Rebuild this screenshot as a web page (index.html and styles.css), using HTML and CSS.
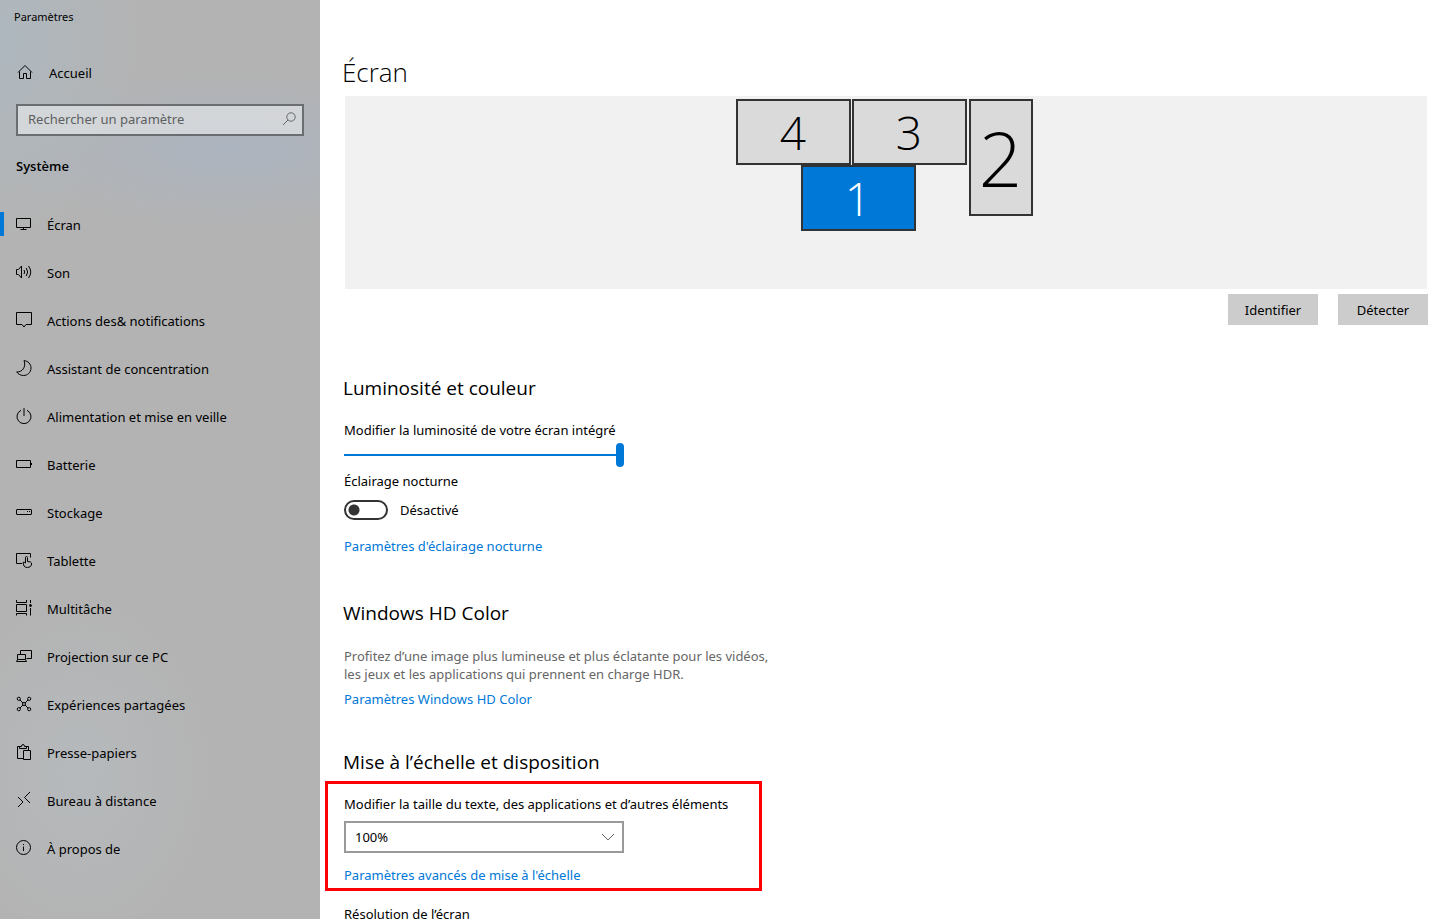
FILE: index.html
```html
<!DOCTYPE html>
<html lang="fr">
<head>
    <meta charset="UTF-8">
    <meta name="viewport" content="width=device-width, initial-scale=1.0">
    <title>Paramètres</title>
    <link rel="stylesheet" href="styles.css">
</head>
<body>
    <div class="window">
        <aside class="sidebar">
            <div class="window-title">Paramètres</div>

            <a href="#" class="nav-item home">
                <svg class="icon" viewBox="0 0 16 16"><path d="M1 8.5 8 1.5l7 7M2.5 7.5v7h4v-5h3v5h4v-7"/></svg>
                <span>Accueil</span>
            </a>

            <div class="search">
                <input type="text" class="search-input" placeholder="Rechercher un paramètre" aria-label="Rechercher un paramètre">
                <svg class="search-icon" viewBox="0 0 16 16"><circle cx="10" cy="6" r="4.2"/><path d="M7 9l-5 5"/></svg>
            </div>

            <h2 class="group-title">Système</h2>

            <nav class="nav">
                <a href="#" class="nav-item active">
                    <svg class="icon" viewBox="0 0 16 16"><path d="M.5 2.5h14v9H.5zM7.5 11.5v2M4.5 13.5h6"/></svg>
                    <span>Écran</span>
                </a>
                <a href="#" class="nav-item">
                    <svg class="icon" viewBox="0 0 16 16"><path d="M.5 5.500h2l3-3.500v12l-3-3.500h-2zM8 6q1.300 2 0 4M10.300 4q2.700 4 0 8M12.500 2q4.500 6 0 12"/></svg>
                    <span>Son</span>
                </a>
                <a href="#" class="nav-item">
                    <svg class="icon" viewBox="0 0 16 16"><path d="M.5.5h15v12H10L8 15l-2-2.500H.5z"/></svg>
                    <span>Actions des&amp; notifications</span>
                </a>
                <a href="#" class="nav-item">
                    <svg class="icon" viewBox="0 0 16 16"><path d="M8 .6C12 1 15 4 15 8c0 4.500-3.500 7.500-7.500 7.500-3 0-5.500-1.500-6.800-3.600C6 12.500 10.500 7 8 .6z"/></svg>
                    <span>Assistant de concentration</span>
                </a>
                <a href="#" class="nav-item">
                    <svg class="icon" viewBox="0 0 16 16"><path d="M5 2.300a7 7 0 1 0 6 0M8 0v8"/></svg>
                    <span>Alimentation et mise en veille</span>
                </a>
                <a href="#" class="nav-item">
                    <svg class="icon" viewBox="0 0 16 16"><path d="M.5 4.500h14v7H.5zM15.500 7v2"/></svg>
                    <span>Batterie</span>
                </a>
                <a href="#" class="nav-item">
                    <svg class="icon" viewBox="0 0 16 16"><rect x=".5" y="5.500" width="15" height="5" rx=".5"/><path d="M11 7.500h1M13 7.500h1"/></svg>
                    <span>Stockage</span>
                </a>
                <a href="#" class="nav-item">
                    <svg class="icon" viewBox="0 0 16 16"><path d="M6 11.500H.5V1.500h14v4M9.500 11V5.500q0-1 1-1t1 1v4q3.500 0 4 1.500v2q-1 2.500-4 2.500-2.500 0-3.500-1.500L7 10.500q1-1 2.500.5"/></svg>
                    <span>Tablette</span>
                </a>
                <a href="#" class="nav-item">
                    <svg class="icon" viewBox="0 0 16 16"><path d="M.5 4.500h10v7H.5zM.5 0v2.500h10V0M.5 15.500v-2h10v2M14.500 0v3M14.500 8v7.500"/><circle class="fill" cx="14.500" cy="5.500" r="1"/></svg>
                    <span>Multitâche</span>
                </a>
                <a href="#" class="nav-item">
                    <svg class="icon" viewBox="0 0 16 16"><path d="M4.500 6V2.500h11v8h-5M1.500 6.500h8v5h-8zM1.500 11.500l-1 2h10l-1-2"/></svg>
                    <span>Projection sur ce PC</span>
                </a>
                <a href="#" class="nav-item">
                    <svg class="icon" viewBox="0 0 16 16"><path d="M4 4l3 3M12 4L9 7M4 12l3-3M12 12L9 9"/><circle cx="2.800" cy="2.800" r="1.600"/><circle cx="13.200" cy="2.800" r="1.600"/><circle cx="2.800" cy="13.200" r="1.600"/><circle cx="13.200" cy="13.200" r="1.600"/><circle cx="8" cy="8" r="1.500"/></svg>
                    <span>Expériences partagées</span>
                </a>
                <a href="#" class="nav-item">
                    <svg class="icon" viewBox="0 0 16 16"><path d="M7 14.500H1.500v-12H4M10 2.500h2.500V6M3.500 4.500v-2H5.500Q5.500.5 7 .5t1.500 2h2v2zM7.500 6.500h7v9h-7z"/></svg>
                    <span>Presse-papiers</span>
                </a>
                <a href="#" class="nav-item">
                    <svg class="icon" viewBox="0 0 16 16"><path d="M2 5l5 5-5 5M14 0L8.500 5.500 14 11"/></svg>
                    <span>Bureau à distance</span>
                </a>
                <a href="#" class="nav-item">
                    <svg class="icon" viewBox="0 0 16 16"><circle cx="7.500" cy="7.500" r="7"/><path d="M7.500 6.500V11M7.500 4v1"/></svg>
                    <span>À propos de</span>
                </a>
            </nav>
        </aside>

        <main class="content">
            <h1>Écran</h1>

            <div class="display-panel">
                <div class="display-map">
                    <button type="button" class="monitor monitor-4">4</button>
                    <button type="button" class="monitor monitor-3">3</button>
                    <button type="button" class="monitor monitor-2">2</button>
                    <button type="button" class="monitor monitor-1 selected">1</button>
                </div>
            </div>
            <div class="display-actions">
                <button type="button" class="btn">Identifier</button>
                <button type="button" class="btn">Détecter</button>
            </div>

            <section class="brightness">
                <h2>Luminosité et couleur</h2>
                <label for="brightness">Modifier la luminosité de votre écran intégré</label>
                <input type="range" id="brightness" class="slider" min="0" max="100" value="100">
                <label for="night-light">Éclairage nocturne</label>
                <div class="toggle-row">
                    <input type="checkbox" id="night-light" class="toggle" role="switch">
                    <span>Désactivé</span>
                </div>
                <a href="#" class="link">Paramètres d'éclairage nocturne</a>
            </section>

            <section class="hd-color">
                <h2>Windows HD Color</h2>
                <p class="description">Profitez d’une image plus lumineuse et plus éclatante pour les vidéos, les jeux et les applications qui prennent en charge HDR.</p>
                <a href="#" class="link">Paramètres Windows HD Color</a>
            </section>

            <section class="scale">
                <h2>Mise à l’échelle et disposition</h2>
                <div class="highlight">
                    <label for="scale">Modifier la taille du texte, des applications et d’autres éléments</label>
                    <div class="select-box">
                        <select id="scale">
                            <option>100%</option>
                        </select>
                        <svg class="chevron" viewBox="0 0 12 12"><path d="M0 3l6 6 6-6"/></svg>
                    </div>
                    <a href="#" class="link">Paramètres avancés de mise à l'échelle</a>
                </div>
                <div class="resolution">Résolution de l’écran</div>
            </section>
        </main>
    </div>
</body>
</html>
```
FILE: styles.css
```css
:root {
    --accent: #0078d7;
    --text: #000000;
    --text-secondary: #666666;
    --border-dark: #333333;
    --font-display: 'Open Sans', 'Noto Sans', sans-serif;
}

* {
    margin: 0;
    padding: 0;
    box-sizing: border-box;
}

body {
    font-family: 'Noto Sans', 'Open Sans', sans-serif;
    font-size: 13px;
    line-height: 18px;
    color: var(--text);
    background-color: #ffffff;
}

button,
input,
select {
    font: inherit;
    color: inherit;
}

a {
    color: inherit;
    text-decoration: none;
}

.window {
    display: grid;
    grid-template-columns: 320px 1fr;
    height: 100vh;
}

/* Sidebar */
.sidebar {
    padding-top: 8px;
    overflow: hidden;
    background:
        radial-gradient(ellipse 140px 200px at 0 40px, rgba(172, 186, 196, 0.7), transparent),
        radial-gradient(ellipse 240px 80px at 230px 150px, rgba(170, 180, 194, 0.8), transparent),
        radial-gradient(ellipse 130px 170px at 80px 770px, rgba(184, 190, 194, 0.6), transparent),
        #b3b3b3;
}

.window-title {
    padding-left: 14px;
    font-size: 11px;
}

.nav-item {
    position: relative;
    display: flex;
    align-items: center;
    gap: 15px;
    height: 48px;
    padding-left: 16px;
}

.nav-item.home {
    margin-top: 23px;
    padding-left: 17px;
    gap: 16px;
}

.nav-item.active::before {
    content: '';
    position: absolute;
    left: 0;
    top: 11px;
    width: 4px;
    height: 24px;
    background-color: var(--accent);
}

.icon {
    width: 16px;
    height: 16px;
    margin-bottom: 2px;
    fill: none;
    stroke: #000000;
}

.icon .fill {
    fill: #000000;
}

.search {
    display: flex;
    align-items: center;
    height: 32px;
    margin: 7px 16px 0;
    padding: 0 5px 2px 10px;
    border: 2px solid #6b6e70;
    background-color: rgba(255, 255, 255, 0.45);
}

.search-input {
    flex: 1;
    min-width: 0;
    border: none;
    outline: none;
    background: none;
}

.search-input::placeholder {
    color: #5c5f61;
    opacity: 1;
}

.search-icon {
    width: 16px;
    height: 16px;
    fill: none;
    stroke: #66696b;
}

.group-title {
    margin: 21px 0 26px 16px;
    font-family: var(--font-display);
    font-size: 13px;
    font-weight: 600;
    line-height: 18px;
}

/* Content */
.content {
    padding: 54px 10px 0 24px;
    overflow: auto;
    scrollbar-width: none;
}

h1 {
    margin: 0 0 6px -2px;
    font-family: var(--font-display);
    font-size: 26px;
    font-weight: 300;
    line-height: 36px;
}

.content h2 {
    margin-left: -1px;
    font-family: var(--font-display);
    font-size: 19px;
    font-weight: 400;
    line-height: 28px;
}

.display-panel {
    min-height: 193px;
    margin: 0 1px;
    padding: 3px 4px 0 0;
    background-color: #f1f1f1;
}

.display-map {
    position: relative;
    width: 297px;
    height: 132px;
    margin: 0 auto;
}

.monitor {
    position: absolute;
    width: 115px;
    height: 66px;
    border: 2px solid var(--border-dark);
    background-color: #dadada;
    font-family: var(--font-display);
    font-size: 46px;
    font-weight: 300;
    line-height: 60px;
}

.monitor-4 {
    left: 0;
    top: 0;
}

.monitor-3 {
    left: 116px;
    top: 0;
}

.monitor-2 {
    left: 233px;
    top: 0;
    width: 64px;
    height: 117px;
    font-size: 76px;
}

.monitor-1 {
    left: 65px;
    top: 66px;
}

.monitor.selected {
    background-color: var(--accent);
    color: #ffffff;
}

.display-actions {
    display: flex;
    justify-content: flex-end;
    gap: 20px;
    margin-top: 5px;
}

.btn {
    width: 90px;
    height: 31px;
    border: none;
    background-color: #cccccc;
}

.content label {
    display: block;
}

.link {
    display: table;
    color: var(--accent);
}

.brightness {
    margin-top: 49px;
}

.brightness h2 {
    margin-bottom: 19px;
}

.slider {
    display: block;
    width: 280px;
    height: 24px;
    margin: 4px 0 5px;
    appearance: none;
    background: linear-gradient(var(--accent), var(--accent)) center / 100% 2px no-repeat;
}

.slider::-webkit-slider-thumb {
    appearance: none;
    width: 8px;
    height: 24px;
    border-radius: 4px;
    background-color: var(--accent);
}

.toggle-row {
    display: flex;
    align-items: center;
    gap: 12px;
    margin: 10px 0 17px;
}

.toggle {
    width: 44px;
    height: 20px;
    appearance: none;
    border: 2px solid var(--border-dark);
    border-radius: 10px;
    background: radial-gradient(circle at 8px 8px, var(--border-dark) 5px, transparent 6px);
}

.hd-color {
    margin-top: 44px;
}

.description {
    max-width: 440px;
    margin: 20px 0 7px;
    color: var(--text-secondary);
}

.scale {
    margin-top: 40px;
}

.highlight {
    max-width: 437px;
    margin: 5px 0 14px -19px;
    padding: 11px 16px 4px;
    border: 3px solid #ff0000;
}

.select-box {
    display: grid;
    align-items: center;
    width: 280px;
    margin: 8px 0 13px;
}

.select-box select,
.chevron {
    grid-area: 1 / 1;
}

.select-box select {
    height: 32px;
    padding: 0 9px;
    appearance: none;
    border: 2px solid #999999;
    border-radius: 0;
    background-color: #ffffff;
}

.chevron {
    justify-self: end;
    width: 12px;
    height: 12px;
    margin-right: 10px;
    fill: none;
    stroke: #666666;
    pointer-events: none;
}
```
